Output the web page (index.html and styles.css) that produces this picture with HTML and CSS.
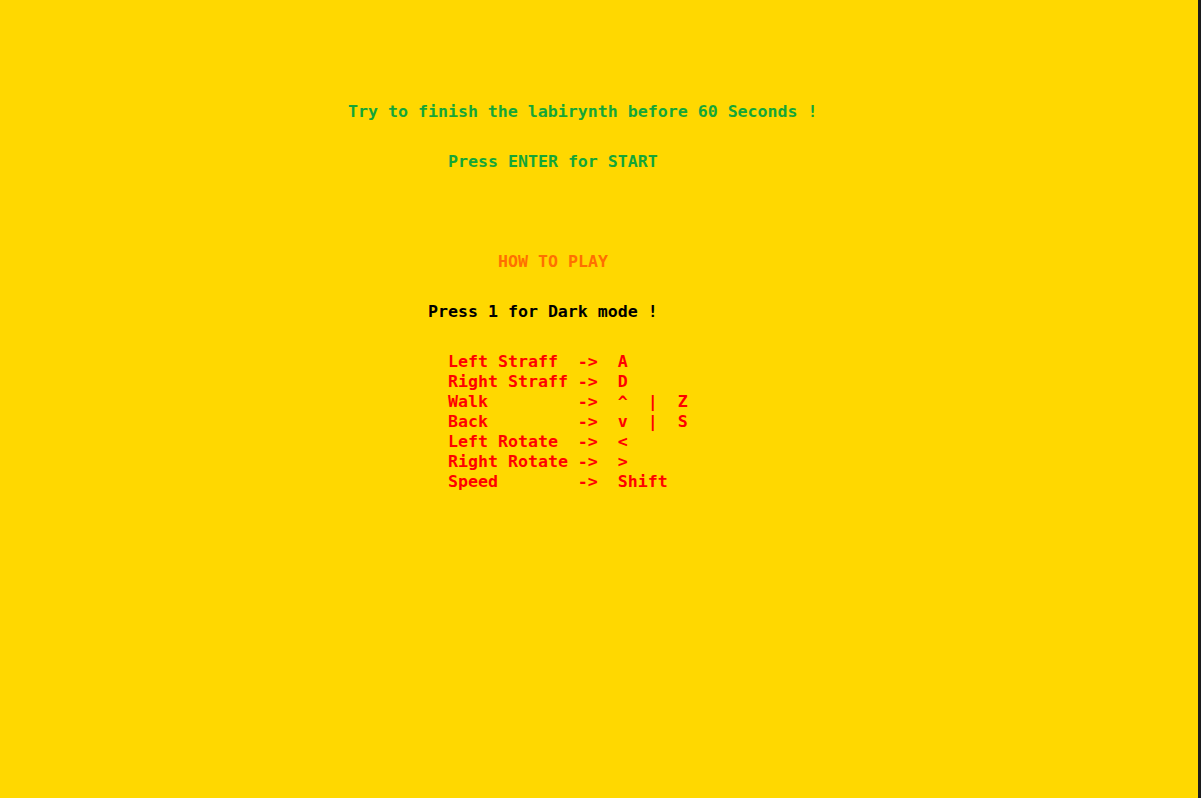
FILE: index.html
```html
<!DOCTYPE html>
<html>
<head>
<meta charset="utf-8">
<title>Labirynth</title>
<link rel="stylesheet" href="styles.css">
</head>
<body>
<div class="screen">
  <main class="menu">
    <div class="line green">Try to finish the labirynth before 60 Seconds !</div>
    <div class="line green indent-10 gap-30">Press ENTER for START</div>
    <div class="line orange indent-15 gap-80">HOW TO PLAY</div>
    <div class="line black indent-8 gap-30">Press 1 for Dark mode !</div>
    <div class="controls indent-10 gap-30">
      <div class="line red">Left Straff  ->  A</div>
      <div class="line red">Right Straff ->  D</div>
      <div class="line red">Walk         ->  ^  |  Z</div>
      <div class="line red">Back         ->  v  |  S</div>
      <div class="line red">Left Rotate  ->  &lt;</div>
      <div class="line red">Right Rotate ->  &gt;</div>
      <div class="line red">Speed        ->  Shift</div>
    </div>
  </main>
  <div class="edge"></div>
</div>
</body>
</html>
```

FILE: styles.css
```css
html, body {
  margin: 0;
  padding: 0;
  height: 100%;
}
body {
  background: #ffd800;
  overflow: hidden;
}
.screen {
  display: flex;
  height: 100%;
}
.menu {
  flex: 1;
  padding-top: 102px;
  padding-left: 348px;
  font-family: "DejaVu Sans Mono", "Liberation Mono", monospace;
  font-weight: bold;
  font-size: 16.6px;
  background: #ffd800;
}
.edge {
  width: 3px;
  background: #1b1b1b;
}
.line {
  height: 20px;
  line-height: 20px;
  white-space: pre;
}
.indent-8 { padding-left: 80px; }
.indent-10 { padding-left: 100px; }
.indent-15 { padding-left: 150px; }
.gap-30 { margin-top: 30px; }
.gap-80 { margin-top: 80px; }
.controls .line { padding-left: 0; }
.green { color: #14a638; }
.orange { color: #ff6f00; }
.black { color: #000; }
.red { color: #ff0000; }
```
